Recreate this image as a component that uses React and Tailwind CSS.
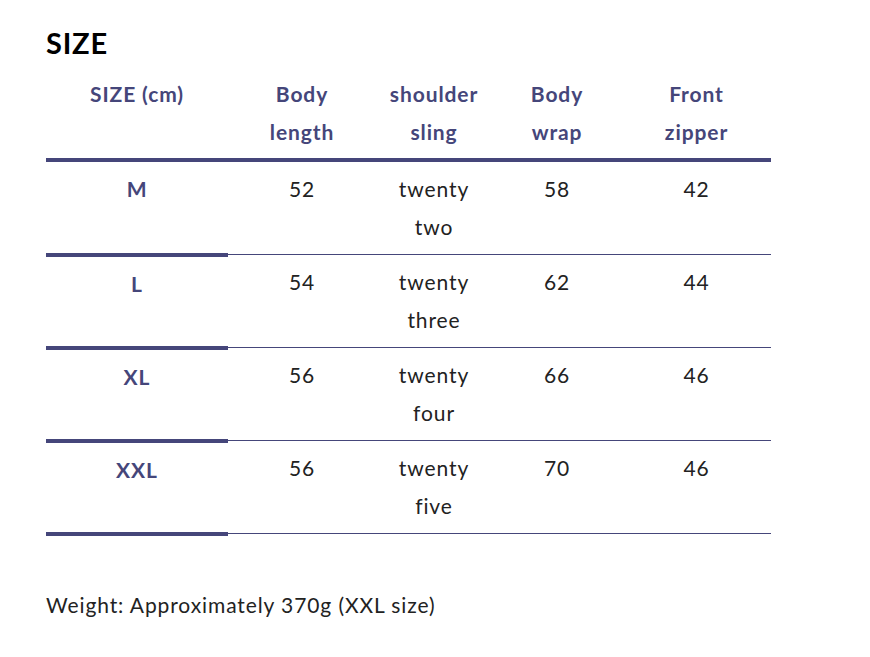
import React from "react";

const rows = [
  { size: "M", len: "52", sling: ["twenty", "two"], wrap: "58", zip: "42" },
  { size: "L", len: "54", sling: ["twenty", "three"], wrap: "62", zip: "44" },
  { size: "XL", len: "56", sling: ["twenty", "four"], wrap: "66", zip: "46" },
  { size: "XXL", len: "56", sling: ["twenty", "five"], wrap: "70", zip: "46" },
];

const App = () => {
  return (
    <div className="min-h-screen bg-white px-[46px] pt-[26px] font-['Lato','Noto_Sans',sans-serif]">
      <h2 className="text-[29px] font-bold leading-[34px] tracking-[0.8px] text-black">SIZE</h2>

      <table className="mt-[8px] w-[725px] table-fixed border-collapse text-center text-[21px] leading-[38px] tracking-[0.9px]">
        <colgroup>
          <col className="w-[182px]" />
          <col className="w-[148px]" />
          <col className="w-[116px]" />
          <col className="w-[130px]" />
          <col className="w-[149px]" />
        </colgroup>
        <thead>
          <tr className="border-b-[4px] border-[#45467a] text-[#45467a]">
            <th className="pt-[7px] pb-[7px] align-top font-bold">SIZE (cm)</th>
            <th className="pt-[7px] pb-[7px] align-top font-bold">Body<br />length</th>
            <th className="pt-[7px] pb-[7px] align-top font-bold">shoulder<br />sling</th>
            <th className="pt-[7px] pb-[7px] align-top font-bold">Body<br />wrap</th>
            <th className="pt-[7px] pb-[7px] align-top font-bold">Front<br />zipper</th>
          </tr>
        </thead>
        <tbody className="text-[#222]">
          {rows.map((r) => (
            <tr key={r.size}>
              <td className="border-b-[4px] border-[#45467a] pt-[8px] pb-[8px] align-top font-bold text-[#45467a]">{r.size}</td>
              <td className="border-b border-[#45467a] pt-[8px] pb-[8px] align-top">{r.len}</td>
              <td className="border-b border-[#45467a] pt-[8px] pb-[8px] align-top">{r.sling[0]}<br />{r.sling[1]}</td>
              <td className="border-b border-[#45467a] pt-[8px] pb-[8px] align-top">{r.wrap}</td>
              <td className="border-b border-[#45467a] pt-[8px] pb-[8px] align-top">{r.zip}</td>
            </tr>
          ))}
        </tbody>
      </table>

      <p className="mt-[54px] text-[21px] leading-[30px] tracking-[0.9px] text-[#222]">Weight: Approximately 370g (XXL size)</p>
    </div>
  );
};

export default App;
